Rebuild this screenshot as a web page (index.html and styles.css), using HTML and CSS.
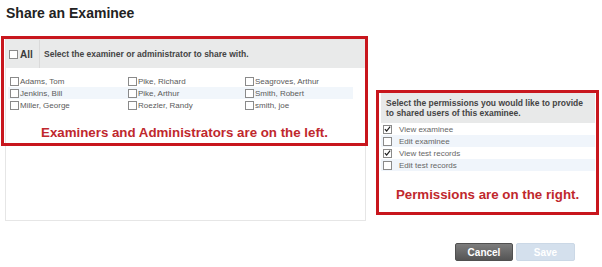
FILE: index.html
```html
<!DOCTYPE html>
<html lang="en">
<head>
  <meta charset="UTF-8" />
  <title>Share an Examinee</title>
  <link rel="stylesheet" href="styles.css">
</head>
<body>
  <h1 class="title">Share an Examinee</h1>

  <div class="content">
    <div class="left-panel">
      <div class="list-head">
        <div class="all-cell"><span class="box"></span>All</div>
        <div class="head-text">Select the examiner or administrator to share with.</div>
      </div>
      <div class="user-list">
        <div class="user-row">
          <label><span class="box"></span>Adams, Tom</label>
          <label><span class="box"></span>Pike, Richard</label>
          <label><span class="box"></span>Seagroves, Arthur</label>
        </div>
        <div class="user-row alt">
          <label><span class="box"></span>Jenkins, Bill</label>
          <label><span class="box"></span>Pike, Arthur</label>
          <label><span class="box"></span>Smith, Robert</label>
        </div>
        <div class="user-row">
          <label><span class="box"></span>Miller, George</label>
          <label><span class="box"></span>Roezler, Randy</label>
          <label><span class="box"></span>smith, joe</label>
        </div>
      </div>
    </div>

    <div class="right-panel">
      <div class="perm-head">Select the permissions you would like to provide to shared users of this examinee.</div>
      <div class="perm-row">
        <span class="pbox checked"><svg viewBox="0 0 8 8" width="8" height="8"><path d="M1 4.2 L3 6.3 L7 1.3" fill="none" stroke="#222" stroke-width="1.4"/></svg></span>
        View examinee
      </div>
      <div class="perm-row alt"><span class="pbox"></span>Edit examinee</div>
      <div class="perm-row">
        <span class="pbox checked"><svg viewBox="0 0 8 8" width="8" height="8"><path d="M1 4.2 L3 6.3 L7 1.3" fill="none" stroke="#222" stroke-width="1.4"/></svg></span>
        View test records
      </div>
      <div class="perm-row alt"><span class="pbox"></span>Edit test records</div>
    </div>
  </div>

  <div class="actions">
    <button class="btn btn-cancel">Cancel</button>
    <button class="btn btn-save">Save</button>
  </div>

  <!-- annotation callouts drawn over the form -->
  <div class="callout callout-left">Examiners and Administrators are on the left.</div>
  <div class="callout callout-right">Permissions are on the right.</div>
</body>
</html>
```

FILE: styles.css
```css
body {
  margin: 0;
  font-family: "Liberation Sans", Arial, sans-serif;
  background: #fff;
  color: #444;
  position: relative;
  width: 602px;
  height: 267px;
  overflow: hidden;
}

.title {
  margin: 4px 0 0 0;
  padding-left: 6px;
  font-size: 14px;
  line-height: 18px;
  font-weight: bold;
  color: #222;
}

.content {
  display: flex;
  align-items: flex-start;
  margin-top: 17px;
  padding-left: 5px;
}

/* Left: examiners list */
.left-panel {
  width: 361px;
  height: 182px;
  box-sizing: border-box;
  border: 1px solid #e6e6e6;
}

.list-head {
  display: flex;
  align-items: center;
  height: 28px;
  background: #e9eaea;
  font-size: 8.5px;
  font-weight: bold;
  color: #444;
}

.all-cell {
  display: flex;
  align-items: center;
  box-sizing: border-box;
  width: 34px;
  height: 100%;
  padding-left: 3px;
  border-right: 1px solid #dadada;
  font-size: 10px;
  color: #3a3a3a;
}

.all-cell .box {
  margin-right: 2px;
}

.head-text {
  padding-left: 4px;
}

.box {
  display: inline-block;
  width: 7px;
  height: 7px;
  border: 1px solid #8a8a8a;
  background: #fff;
  margin-right: 1px;
  vertical-align: middle;
}

.user-list {
  padding: 7px 12px 0 2px;
}

.user-row {
  display: grid;
  grid-template-columns: 118px 117px auto;
  height: 12px;
  align-items: center;
  padding-left: 2px;
  font-size: 8px;
  color: #5a5a5a;
}

.user-row label {
  display: flex;
  align-items: center;
}

.user-row.alt {
  background: #f1f6fb;
}

/* Right: permissions */
.right-panel {
  width: 214px;
  margin-left: 15px;
  margin-top: 54px;
}

.perm-head {
  background: #e8e9e9;
  padding: 6px 4px 5px 5px;
  font-size: 8.5px;
  line-height: 9.5px;
  font-weight: bold;
  color: #444;
}

.perm-row {
  display: flex;
  align-items: center;
  height: 12px;
  padding-left: 2px;
  font-size: 8px;
  color: #666;
}

.perm-row:first-of-type {
  margin-top: 1px;
}

.perm-row.alt {
  background: #f0f5fb;
}

.pbox {
  display: inline-flex;
  align-items: center;
  justify-content: center;
  width: 7px;
  height: 7px;
  border: 1px solid #8a8a8a;
  background: #fff;
  margin-right: 7px;
}

/* Buttons */
.actions {
  display: flex;
  justify-content: flex-end;
  gap: 3px;
  padding-right: 27px;
  margin-top: 22px;
}

.btn {
  height: 18px;
  border-radius: 2px;
  font-family: "Liberation Sans", Arial, sans-serif;
  font-size: 10px;
  font-weight: bold;
  color: #fff;
  padding: 0;
  cursor: pointer;
}

.btn-cancel {
  width: 58px;
  background: linear-gradient(#7d7d7d, #555);
  border: 1px solid #505050;
}

.btn-save {
  width: 59px;
  background: #d4e0ed;
  border: 1px solid #cbd8e6;
}

/* Red annotation boxes */
.callout {
  position: absolute;
  box-sizing: border-box;
  border: 3px solid #c8161d;
  display: flex;
  align-items: flex-end;
  justify-content: center;
  font-size: 13.3px;
  font-weight: bold;
  line-height: 15px;
  color: #c0282d;
}

.callout-left {
  left: 1px;
  top: 36px;
  width: 367px;
  height: 110px;
  padding-bottom: 3px;
}

.callout-right {
  left: 376px;
  top: 90px;
  width: 223px;
  height: 125px;
  padding-bottom: 10px;
}
```
